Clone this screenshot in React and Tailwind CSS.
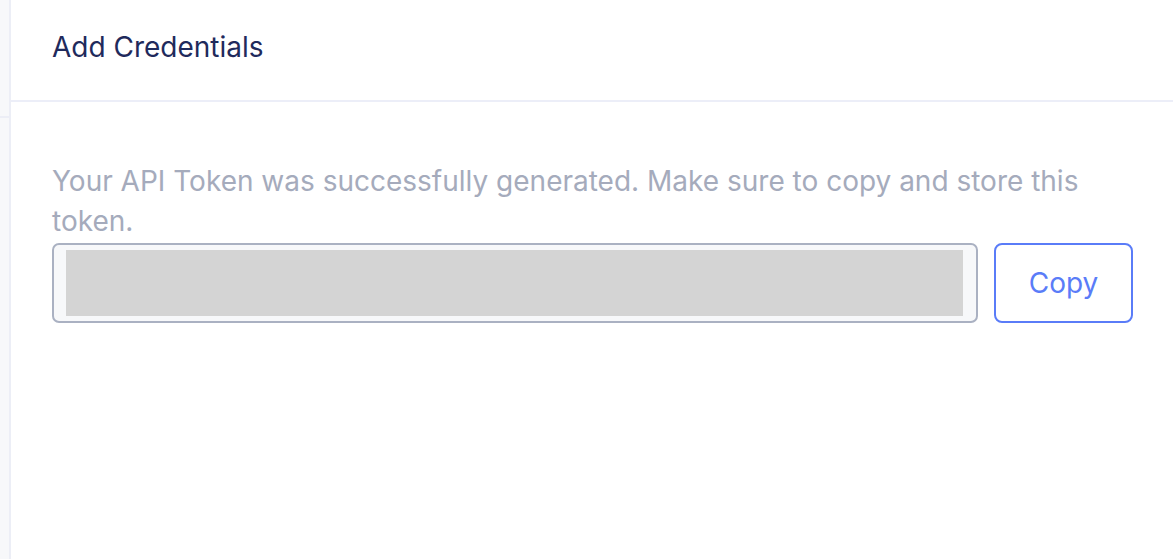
import React from "react";

export default function App() {
  return (
    <div
      className="flex h-[559px] w-[1176px] overflow-hidden bg-white"
      style={{ fontFamily: "Inter, 'Noto Sans', sans-serif" }}
    >
      {/* left rail */}
      <div className="w-[11px] shrink-0 border-r-2 border-[#eceef6] bg-[#f7f8fa]">
        <div className="h-[118px] border-b-2 border-[#eceef6]" />
      </div>

      {/* panel */}
      <div className="flex w-[1162px] flex-col">
        <div className="flex h-[102px] items-center border-b-2 border-[#eceef8] pl-[41px]">
          <h2 className="pb-[6px] text-[28px] font-normal text-[#1f2a5c]">
            Add Credentials
          </h2>
        </div>

        <div className="pl-[41px] pr-[40px] pt-[59px]">
          <p className="w-[1060px] text-[28px] leading-[40px] text-[#a5abbc]">
            Your API Token was successfully generated. Make sure to copy and
            store this token.
          </p>
          <div className="mt-[2px] flex gap-[16px]">
            <div className="flex h-[80px] w-[926px] items-center rounded-[7px] border-2 border-[#aab1c2] bg-[#f7f8fa] py-[4px] pl-[12px] pr-[13px]">
              <div className="h-[66px] w-full bg-[#d4d4d4]" />
            </div>
            <button className="h-[80px] w-[139px] rounded-[8px] border-2 border-[#5a7cf8] bg-white text-[28px] text-[#5a7cf8]">
              Copy
            </button>
          </div>
        </div>
      </div>
    </div>
  );
}
